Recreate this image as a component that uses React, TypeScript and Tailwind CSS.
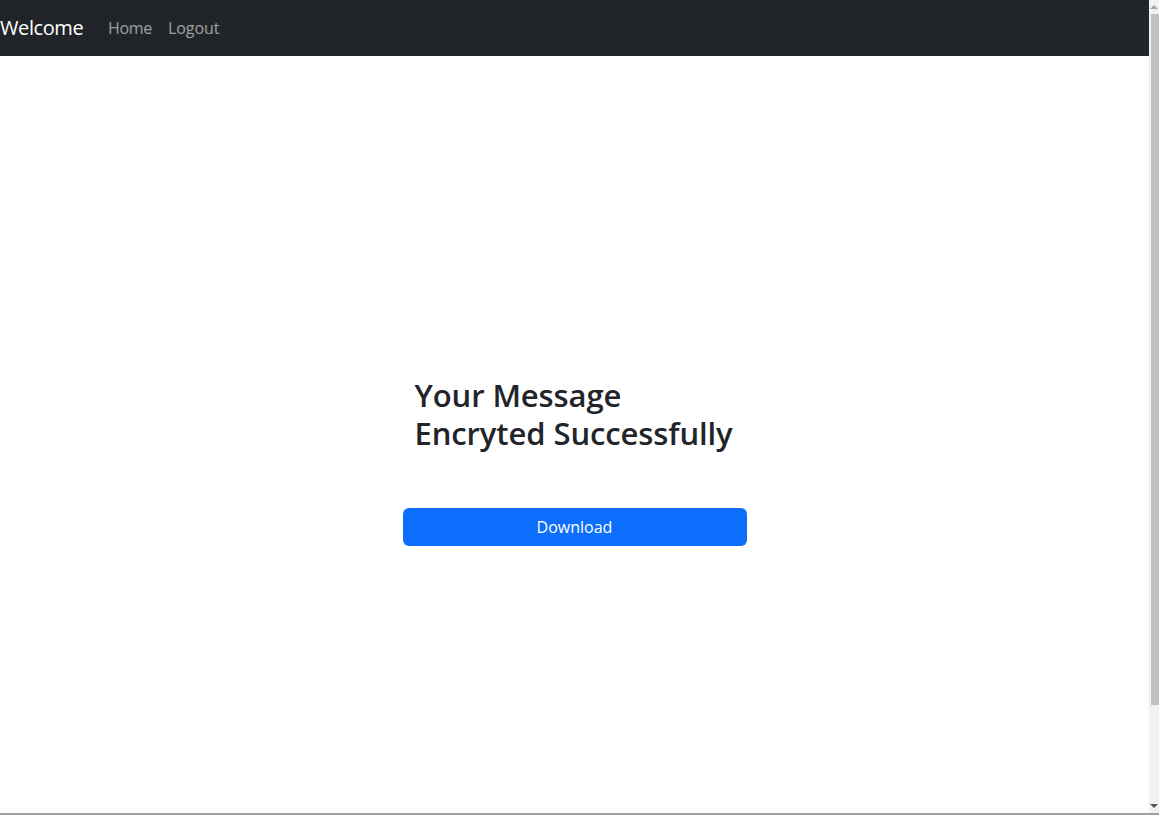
import React from 'react';

const font = { fontFamily: '"Open Sans", "Noto Sans", sans-serif' };

const Scrollbar: React.FC = () => (
  <div className="w-[10px] shrink-0 bg-[#f1f1f1] flex flex-col items-end">
    <div className="h-[14px] w-full flex items-center justify-center">
      <div className="w-0 h-0 border-l-[4px] border-r-[4px] border-b-[4px] border-l-transparent border-r-transparent border-b-[#a3a3a3]" />
    </div>
    <div className="w-[8px] h-[691px] bg-[#c1c1c1]" />
    <div className="flex-1" />
    <div className="h-[14px] w-full flex items-center justify-center">
      <div className="w-0 h-0 border-l-[4px] border-r-[4px] border-t-[4px] border-l-transparent border-r-transparent border-t-[#505050]" />
    </div>
  </div>
);

const App: React.FC = () => {
  return (
    <div className="h-[815px] w-[1159px] flex flex-col bg-white overflow-hidden" style={font}>
      <div className="flex flex-1 min-h-0">
        <div className="flex-1 flex flex-col">
          {/* Navbar */}
          <nav className="h-14 bg-[#212529] flex items-center">
            <a className="w-[100px] text-[20px] text-white leading-[30px] tracking-[-0.4px]">Welcome</a>
            <a className="px-2 text-base text-white/55 tracking-[-0.3px]">Home</a>
            <a className="px-2 text-base text-white/55 tracking-[-0.1px]">Logout</a>
          </nav>

          {/* Content */}
          <main className="flex-1 flex justify-center pt-[320px]">
            <div className="w-[344px]">
              <h2 className="px-3 text-[31px] leading-[38px] font-semibold text-[#212529] tracking-[-0.1px]">
                Your Message
                <br />
                Encryted Successfully
              </h2>
              <button className="mt-[56px] w-full h-[38px] rounded-md bg-[#0d6efd] text-white text-base">
                Download
              </button>
            </div>
          </main>
        </div>
        <Scrollbar />
      </div>
      <div className="h-[2px] bg-[#a0a0a0]" />
    </div>
  );
};

export default App;
